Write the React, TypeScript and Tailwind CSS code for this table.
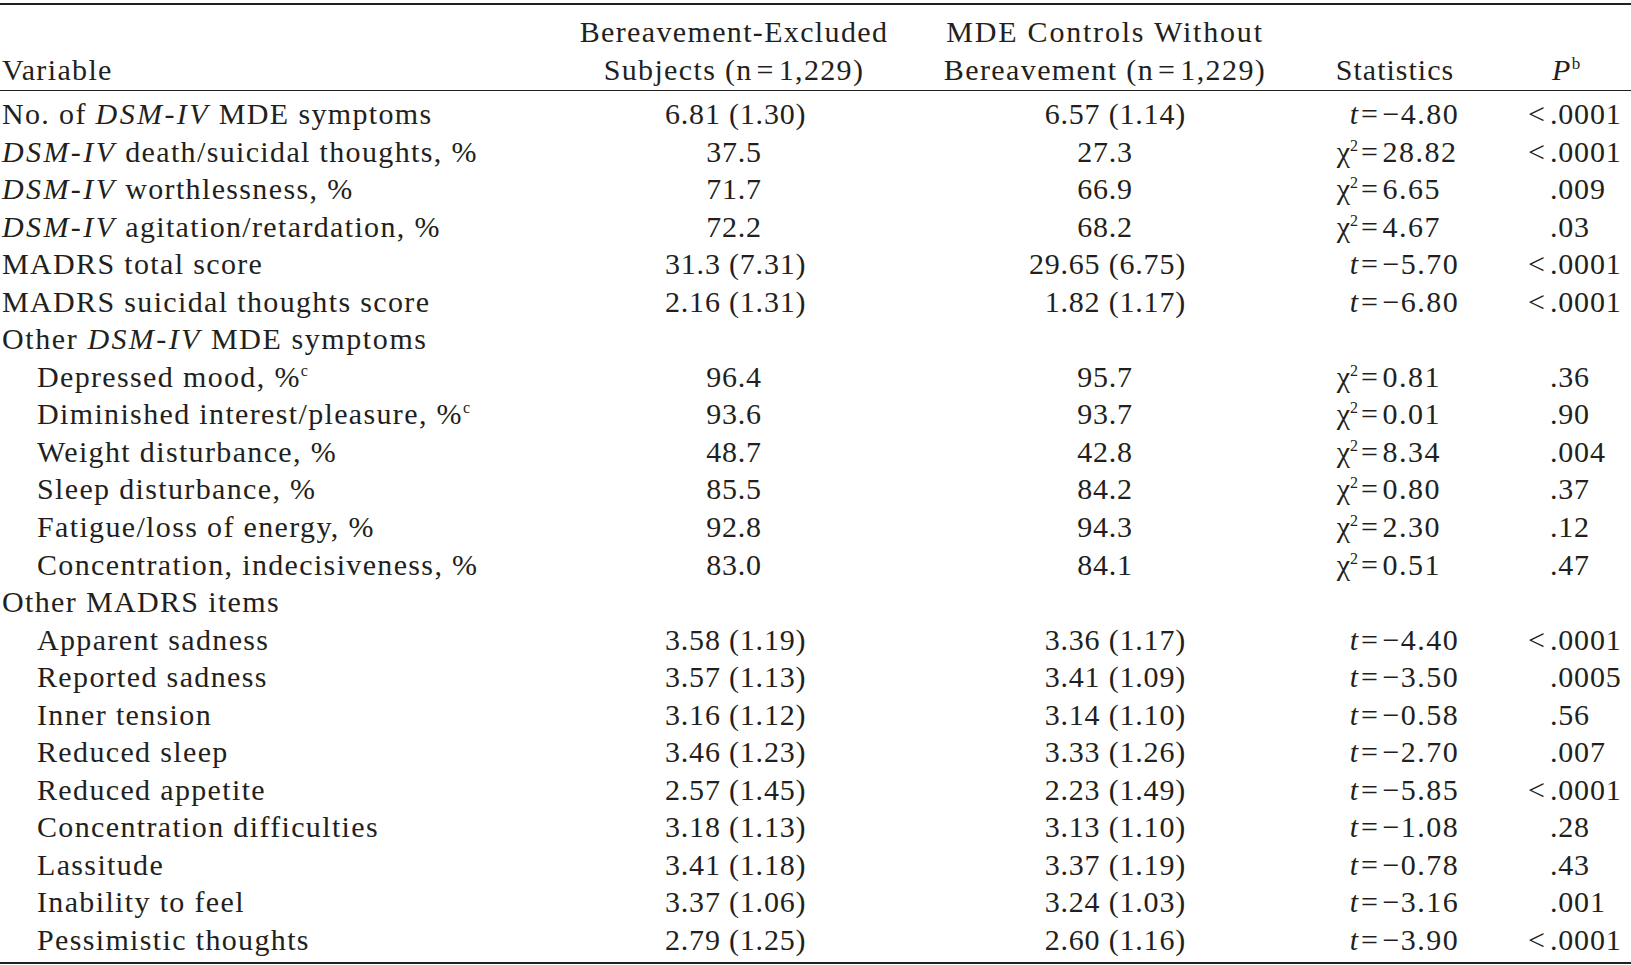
import * as React from "react";

type Stat = { kind: "t" | "chi"; value: string };
type Row =
  | { type: "section"; label: React.ReactNode }
  | {
      type: "data";
      label: React.ReactNode;
      indent?: boolean;
      a: string;
      b: string;
      meanSd?: boolean;
      stat: Stat;
      lt?: boolean;
      p: string;
    };

const DSM = <i className="tracking-[2.4px]">DSM-IV</i>;
const SupC = <span className="align-super text-[16px] leading-none">c</span>;

const ROWS: Row[] = [
  { type: "data", label: <>No. of {DSM} MDE symptoms</>, a: "6.81 (1.30)", b: "6.57 (1.14)", meanSd: true, stat: { kind: "t", value: "−4.80" }, lt: true, p: ".0001" },
  { type: "data", label: <>{DSM} death/suicidal thoughts, %</>, a: "37.5", b: "27.3", stat: { kind: "chi", value: "28.82" }, lt: true, p: ".0001" },
  { type: "data", label: <>{DSM} worthlessness, %</>, a: "71.7", b: "66.9", stat: { kind: "chi", value: "6.65" }, p: ".009" },
  { type: "data", label: <>{DSM} agitation/retardation, %</>, a: "72.2", b: "68.2", stat: { kind: "chi", value: "4.67" }, p: ".03" },
  { type: "data", label: "MADRS total score", a: "31.3 (7.31)", b: "29.65 (6.75)", meanSd: true, stat: { kind: "t", value: "−5.70" }, lt: true, p: ".0001" },
  { type: "data", label: "MADRS suicidal thoughts score", a: "2.16 (1.31)", b: "1.82 (1.17)", meanSd: true, stat: { kind: "t", value: "−6.80" }, lt: true, p: ".0001" },
  { type: "section", label: <span className="tracking-[1.6px]">Other {DSM} MDE symptoms</span> },
  { type: "data", indent: true, label: <>Depressed mood, %{SupC}</>, a: "96.4", b: "95.7", stat: { kind: "chi", value: "0.81" }, p: ".36" },
  { type: "data", indent: true, label: <>Diminished interest/pleasure, %{SupC}</>, a: "93.6", b: "93.7", stat: { kind: "chi", value: "0.01" }, p: ".90" },
  { type: "data", indent: true, label: "Weight disturbance, %", a: "48.7", b: "42.8", stat: { kind: "chi", value: "8.34" }, p: ".004" },
  { type: "data", indent: true, label: "Sleep disturbance, %", a: "85.5", b: "84.2", stat: { kind: "chi", value: "0.80" }, p: ".37" },
  { type: "data", indent: true, label: "Fatigue/loss of energy, %", a: "92.8", b: "94.3", stat: { kind: "chi", value: "2.30" }, p: ".12" },
  { type: "data", indent: true, label: "Concentration, indecisiveness, %", a: "83.0", b: "84.1", stat: { kind: "chi", value: "0.51" }, p: ".47" },
  { type: "section", label: "Other MADRS items" },
  { type: "data", indent: true, label: "Apparent sadness", a: "3.58 (1.19)", b: "3.36 (1.17)", meanSd: true, stat: { kind: "t", value: "−4.40" }, lt: true, p: ".0001" },
  { type: "data", indent: true, label: "Reported sadness", a: "3.57 (1.13)", b: "3.41 (1.09)", meanSd: true, stat: { kind: "t", value: "−3.50" }, p: ".0005" },
  { type: "data", indent: true, label: "Inner tension", a: "3.16 (1.12)", b: "3.14 (1.10)", meanSd: true, stat: { kind: "t", value: "−0.58" }, p: ".56" },
  { type: "data", indent: true, label: "Reduced sleep", a: "3.46 (1.23)", b: "3.33 (1.26)", meanSd: true, stat: { kind: "t", value: "−2.70" }, p: ".007" },
  { type: "data", indent: true, label: "Reduced appetite", a: "2.57 (1.45)", b: "2.23 (1.49)", meanSd: true, stat: { kind: "t", value: "−5.85" }, lt: true, p: ".0001" },
  { type: "data", indent: true, label: "Concentration difficulties", a: "3.18 (1.13)", b: "3.13 (1.10)", meanSd: true, stat: { kind: "t", value: "−1.08" }, p: ".28" },
  { type: "data", indent: true, label: "Lassitude", a: "3.41 (1.18)", b: "3.37 (1.19)", meanSd: true, stat: { kind: "t", value: "−0.78" }, p: ".43" },
  { type: "data", indent: true, label: "Inability to feel", a: "3.37 (1.06)", b: "3.24 (1.03)", meanSd: true, stat: { kind: "t", value: "−3.16" }, p: ".001" },
  { type: "data", indent: true, label: "Pessimistic thoughts", a: "2.79 (1.25)", b: "2.60 (1.16)", meanSd: true, stat: { kind: "t", value: "−3.90" }, lt: true, p: ".0001" },
];

const cell = "p-0 h-[37.55px] leading-[37.55px] whitespace-nowrap align-middle";
const num = `${cell} tracking-[0.8px]`;
const th = "border-b-[1.5px] border-[#231f20] pt-[8px] pb-[2px] align-bottom font-normal";
const N = "n\u200a=\u200a1,229";

function StatCell({ stat }: { stat: Stat }) {
  return (
    <div className="flex pl-[31px] tracking-[1.5px]">
      <span className="w-[25px] text-right tracking-normal">
        {stat.kind === "t" ? (
          <i>t</i>
        ) : (
          <>
            χ<span className="align-super text-[16px] leading-none">2</span>
          </>
        )}
      </span>
      <span className="mx-[3px]">=</span>
      <span>{stat.value}</span>
    </div>
  );
}

export default function App() {
  return (
    <div
      className="min-h-screen bg-white text-[#231f20] text-[30px] tracking-[1.35px]"
      style={{ fontFamily: '"Liberation Serif", "Times New Roman", serif' }}
    >
      <div className="pt-[3px]">
        <div className="border-t-2 border-b-2 border-[#231f20] pb-[3px]">
          <table className="w-full table-fixed border-separate border-spacing-0">
            <colgroup>
              <col className="w-[560px]" />
              <col className="w-[348px]" />
              <col className="w-[394px]" />
              <col className="w-[186px]" />
              <col />
            </colgroup>
            <thead>
              <tr className="leading-[37.5px]">
                <th className={`${th} pl-[2px] text-left`}>Variable</th>
                <th className={`${th} text-center`}>
                  Bereavement-Excluded
                  <br />
                  Subjects ({N})
                </th>
                <th className={`${th} text-center tracking-[1.8px]`}>
                  MDE Controls Without
                  <br />
                  <span className="tracking-[1.4px]">Bereavement ({N})</span>
                </th>
                <th className={`${th} text-center tracking-[1px]`}>Statistics</th>
                <th className={`${th} pl-[64px] text-left`}>
                  <i>P</i>
                  <span className="align-super text-[17px] leading-none">b</span>
                </th>
              </tr>
            </thead>
            <tbody>
              <tr aria-hidden className="h-[4px]">
                <td colSpan={5} className="p-0" />
              </tr>
              {ROWS.map((r, i) =>
                r.type === "section" ? (
                  <tr key={i}>
                    <td className={`${cell} pl-[2px]`}>{r.label}</td>
                    <td className={cell} />
                    <td className={cell} />
                    <td className={cell} />
                    <td className={cell} />
                  </tr>
                ) : (
                  <tr key={i}>
                    <td className={`${cell} ${r.indent ? "pl-[37px]" : "pl-[2px]"}`}>{r.label}</td>
                    <td className={`${num} text-center`}>
                      {r.meanSd ? (
                        <span className="inline-block w-[138px] text-right">{r.a}</span>
                      ) : (
                        r.a
                      )}
                    </td>
                    <td className={`${num} text-center`}>
                      {r.meanSd ? (
                        <span className="inline-block w-[162px] text-right">{r.b}</span>
                      ) : (
                        r.b
                      )}
                    </td>
                    <td className={cell}>
                      <StatCell stat={r.stat} />
                    </td>
                    <td className={num}>
                      <div className="flex pl-[40px]">
                        <span className="w-[22px]">{r.lt ? "<" : ""}</span>
                        <span>{r.p}</span>
                      </div>
                    </td>
                  </tr>
                )
              )}
            </tbody>
          </table>
        </div>
      </div>
    </div>
  );
}
